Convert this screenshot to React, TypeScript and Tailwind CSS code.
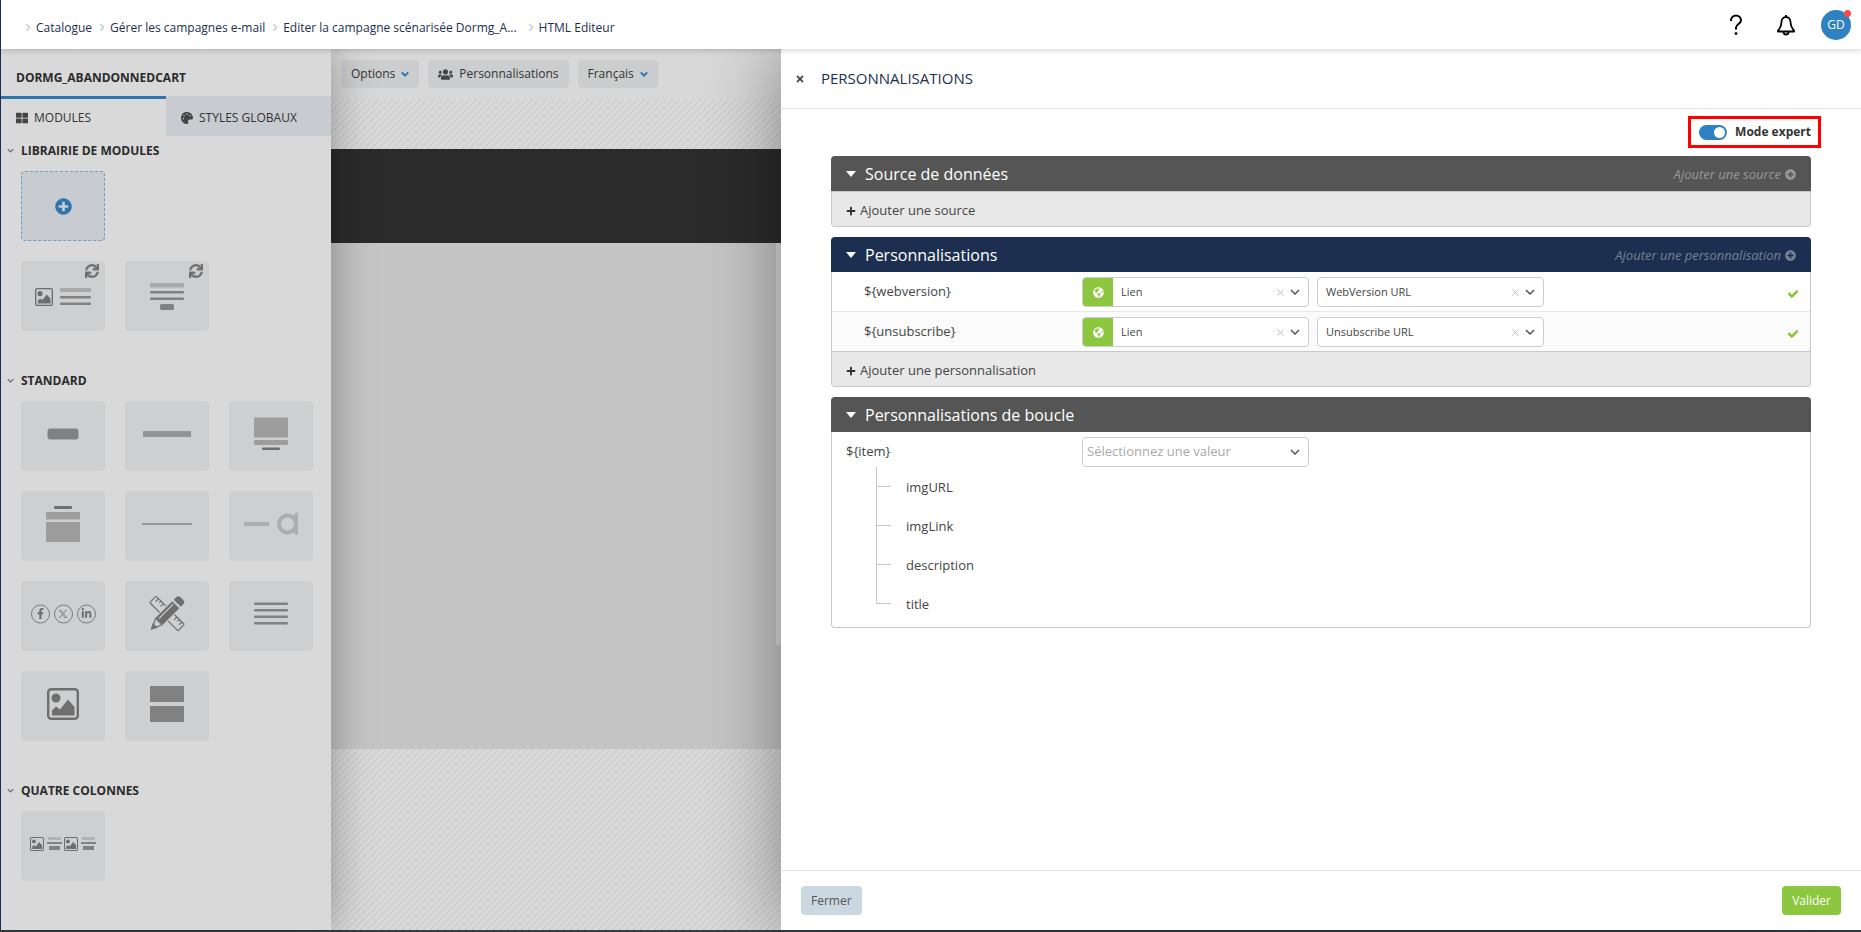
import { FC, ReactNode, useState } from "react";
import {
  FaCheck,
  FaFacebookF,
  FaGlobeAmericas,
  FaLinkedinIn,
  FaPalette,
  FaPlus,
  FaPlusCircle,
  FaSync,
  FaThLarge,
  FaTimes,
  FaUsers,
} from "react-icons/fa";
import { FaXTwitter } from "react-icons/fa6";

const crumbs = [
  "Catalogue",
  "Gérer les campagnes e-mail",
  "Editer la campagne scénarisée Dormg_A...",
  "HTML Editeur",
];

const tokens = [
  { name: "${webversion}", value: "WebVersion URL" },
  { name: "${unsubscribe}", value: "Unsubscribe URL" },
];

const loopFields = ["imgURL", "imgLink", "description", "title"];

const Chevron: FC<{ className?: string; width?: number }> = ({ className = "", width = 2 }) => (
  <svg viewBox="0 0 10 6" className={className} fill="none" stroke="currentColor" strokeWidth={width}>
    <path d="M1 1l4 4 4-4" />
  </svg>
);

/* Sidebar drawings, all on an 84x70 tile */
const Drawing: FC<{ children: ReactNode }> = ({ children }) => (
  <svg viewBox="0 0 84 70" className="h-[70px] w-[84px]" fill="#818181">
    {children}
  </svg>
);

const Picture: FC<{ x: number; y: number; size: number; stroke?: number }> = ({ x, y, size, stroke = 2 }) => (
  <svg x={x} y={y} width={size} height={size} viewBox="0 0 32 32" fill="#6e6e6e">
    <rect x={stroke / 2} y={stroke / 2} width={32 - stroke} height={32 - stroke} rx="3" fill="none" stroke="#6e6e6e" strokeWidth={stroke} />
    <circle cx="9" cy="10" r="4.5" />
    <path d="M5 27.500v-5l4-4 4 3 8-10 6.500 7.500v8.500z" />
  </svg>
);

const TextPicture = () => (
  <Drawing>
    <Picture x={14} y={27} size={18} stroke={2.4} />
    <rect x="39" y="27" width="31" height="4" fill="#a9a9a9" />
    <rect x="39" y="35" width="31" height="2.500" rx="1" />
    <rect x="39" y="41.500" width="31" height="2.500" rx="1" />
  </Drawing>
);

const TextButton = () => (
  <Drawing>
    <rect x="25" y="22" width="34" height="4.500" fill="#a9a9a9" />
    <rect x="25" y="30" width="34" height="2.500" rx="1" />
    <rect x="25" y="36.500" width="34" height="2.500" rx="1" />
    <rect x="35" y="43" width="14" height="6" rx="1.500" />
  </Drawing>
);

const standardTiles: { label: string; art: ReactNode }[] = [
  { label: "Bouton", art: <Drawing><rect x="26.500" y="27.500" width="31" height="11" rx="3" /></Drawing> },
  { label: "Titre", art: <Drawing><rect x="18" y="30" width="48" height="6" fill="#949494" /></Drawing> },
  {
    label: "Pied de page",
    art: (
      <Drawing>
        <rect x="25" y="16.500" width="34" height="20" fill="#9d9d9d" />
        <rect x="25" y="39" width="34" height="5" rx="1" fill="#9d9d9d" />
        <rect x="33" y="46.500" width="18" height="2.500" rx="1" fill="#6e6e6e" />
      </Drawing>
    ),
  },
  {
    label: "En-tête",
    art: (
      <Drawing>
        <rect x="33" y="15" width="18" height="3" rx="1" fill="#6e6e6e" />
        <rect x="25" y="21" width="34" height="7.500" fill="#9d9d9d" />
        <rect x="25" y="31" width="34" height="20" fill="#9d9d9d" />
      </Drawing>
    ),
  },
  { label: "Séparateur", art: <Drawing><rect x="17" y="32" width="50" height="2" fill="#989898" /></Drawing> },
  {
    label: "Logo",
    art: (
      <Drawing>
        <rect x="15" y="31" width="25" height="4" fill="#adadad" />
        <circle cx="58.500" cy="33" r="8.500" fill="none" stroke="#adadad" strokeWidth="4" />
        <path d="M69 21.500V44q-4 0-4-3V25q0-3 4-3.500z" fill="#adadad" />
      </Drawing>
    ),
  },
  {
    label: "Réseaux sociaux",
    art: (
      <Drawing>
        <g fill="none" stroke="#7a7a7a">
          <circle cx="19.500" cy="33" r="9" />
          <circle cx="42.500" cy="33" r="9" />
          <circle cx="65.500" cy="33" r="9" />
        </g>
        <FaFacebookF x={14} y={27} size={11} color="#6e6e6e" />
        <FaXTwitter x={37} y={28} size={10} color="#8a8a8a" />
        <FaLinkedinIn x={60} y={27} size={11} color="#6e6e6e" />
      </Drawing>
    ),
  },
  {
    label: "HTML",
    art: (
      <Drawing>
        <g transform="translate(42 32.500) rotate(45)">
          <rect x="-20" y="-4.500" width="40" height="9" rx="1" fill="none" stroke="#6e6e6e" strokeWidth="1.200" />
          <path d="M-16.500-4.500v4M-13-4.500v2.500M-9.500-4.500v4M9.500-4.500v4M13-4.500v2.500M16.500-4.500v4" stroke="#6e6e6e" strokeWidth="1.200" />
        </g>
        <g transform="translate(42 32.500) rotate(-45)" fill="#6e6e6e">
          <rect x="-14" y="-6" width="34" height="12" fill="#cecfd1" />
          <path d="M14.500-5h3.500q3 0 3 3v4q0 3-3 3h-3.500z" />
          <rect x="-11" y="-5" width="23.500" height="10" />
          <path d="M-9-2.200h20" stroke="#cecfd1" strokeWidth="1.200" />
          <path d="M-11.500-4.500L-21.500 0l10 4.500z" fill="#cecfd1" stroke="#6e6e6e" strokeWidth="1.200" />
          <path d="M-23 0l6.500-3.500v7z" />
        </g>
      </Drawing>
    ),
  },
  {
    label: "Texte",
    art: (
      <Drawing>
        {[21.5, 28, 34.5, 41].map((y) => (
          <rect key={y} x="25" y={y} width="34" height="2.500" rx="1" />
        ))}
      </Drawing>
    ),
  },
  { label: "Image", art: <Drawing><Picture x={26} y={17} size={32} stroke={2.4} /></Drawing> },
  {
    label: "Conteneur",
    art: (
      <Drawing>
        <rect x="25" y="15" width="34" height="16" />
        <rect x="25" y="35" width="34" height="16" />
      </Drawing>
    ),
  },
];

const FourColumns = () => (
  <Drawing>
    {[0, 34].map((x) => (
      <g key={x}>
        <Picture x={9 + x} y={26} size={14} stroke={2.4} />
        <rect x={27 + x} y="26" width="13" height="3" fill="#b3b3b3" />
        <rect x={26 + x} y="31" width="15" height="2" />
        <rect x={28 + x} y="35" width="11" height="4" />
      </g>
    ))}
  </Drawing>
);

const Tile: FC<{ label: string; sync?: boolean; children: ReactNode }> = ({ label, sync, children }) => (
  <button aria-label={label} className="relative h-[70px] w-[84px] rounded-sm bg-[#cecfd1]">
    {children}
    {sync && <FaSync className="absolute top-[3px] right-1.5 size-[14px] stroke-current stroke-[16] text-[#707070]" />}
  </button>
);

const ModuleGroup: FC<{ title: string; children: ReactNode }> = ({ title, children }) => (
  <section className="mb-[35px]">
    <h2 className="flex h-[30px] items-center text-[12px] font-bold text-[#2b2b2b]">
      <Chevron className="mr-[7px] mb-0.5 ml-1.5 h-[5px] w-[7px] text-[#666]" width={1.6} />
      {title}
    </h2>
    <div className="flex flex-wrap gap-5 pt-[5px] pl-5">{children}</div>
  </section>
);

const Dropdown: FC<{ label: string; value?: string; globe?: boolean }> = ({ label, value, globe }) => (
  <div className="relative flex h-[30px] w-[227px] overflow-hidden rounded-sm border border-[#ccc] bg-white">
    {globe && (
      <span className="flex w-[30px] shrink-0 items-center justify-center bg-[#8dc63f] text-white">
        <FaGlobeAmericas className="size-[11px]" />
      </span>
    )}
    <select
      aria-label={label}
      className={
        value
          ? "w-full appearance-none pr-12 pl-2 text-[11px] text-[#444]"
          : "w-full appearance-none pr-8 pl-1 text-[13px] text-[#aaa]"
      }
    >
      <option>{value || "Sélectionnez une valeur"}</option>
    </select>
    {value && (
      <button aria-label="Effacer" className="absolute inset-y-0 right-6 text-[#bbb]">
        <svg viewBox="0 0 7 7" className="size-[7px]" stroke="currentColor">
          <path d="M.5.5l6 6M6.500.5l-6 6" />
        </svg>
      </button>
    )}
    <Chevron className="pointer-events-none absolute top-[11px] right-2 h-[6px] w-[10px] text-[#555]" width={1.5} />
  </div>
);

const Panel: FC<{ title: string; add?: string; active?: boolean; children: ReactNode }> = ({ title, add, active, children }) => (
  <section className="mb-2.5">
    <header
      className={`flex h-[35px] items-center justify-between rounded-t-sm px-[15px] text-white ${active ? "bg-[#1c2f50]" : "bg-[#555]"}`}
    >
      <h2 className="flex items-center text-[16px]">
        <svg viewBox="0 0 10 6" className="mr-[9px] h-[6px] w-[10px]" fill="currentColor">
          <path d="M0 0h10L5 6z" />
        </svg>
        {title}
      </h2>
      {add && (
        <button className="flex items-center gap-1 pt-0.5 text-[13px] text-white/40 italic">
          {add}
          <FaPlusCircle className="size-[11px]" />
        </button>
      )}
    </header>
    <div className="overflow-hidden rounded-b-sm border-x border-b border-[#c8c8c8]">{children}</div>
  </section>
);

const AddRow: FC<{ children: ReactNode }> = ({ children }) => (
  <button className="flex h-[35px] w-full items-center gap-1 border-t border-[#c8c8c8] bg-[#e8e8e8] pt-1 pl-3.5 text-[13px] text-[#444]">
    <FaPlus className="size-[10px] text-[#333]" />
    {children}
  </button>
);

const App: FC = () => {
  const [expert, setExpert] = useState(true);

  return (
    <div className="flex min-h-screen flex-col border-b-2 border-[#3b3c40] font-['Open_Sans',sans-serif] text-[#333]">
      {/* Top bar */}
      <header className="relative z-20 flex h-[49px] items-center justify-between border-l border-[#1a2c55] bg-white pr-2.5 shadow-[0_1px_6px_rgba(0,0,0,0.2)]">
        <nav className="flex items-center pt-1.5 pl-[23px] text-[12px] text-[#1c2f50]">
          {crumbs.map((crumb) => (
            <a key={crumb} href="#" className="mr-1.5 flex items-center last:pl-1 last:font-medium">
              <Chevron className="mr-1 h-[5px] w-[8px] -rotate-90 text-[#ccc]" />
              {crumb}
            </a>
          ))}
        </nav>
        <div className="flex items-center">
          <button aria-label="Aide" className="mr-[34px]">
            <svg viewBox="0 0 14 22" className="h-[22px] w-[14px]" fill="none" stroke="#000" strokeWidth="2">
              <path d="M2 7V6.500a5 5 0 0 1 10 0c0 3-5 4-5 7v2" />
              <circle cx="7" cy="19.500" r="1" fill="#000" strokeWidth="1" />
            </svg>
          </button>
          <button aria-label="Notifications" className="mr-[26px]">
            <svg viewBox="0 0 18 22" className="h-[22px] w-[18px]" fill="none" stroke="#000" strokeWidth="1.800" strokeLinejoin="round">
              <path d="M9 1v2M9 3C6.500 3 4.500 5 4.500 8c0 5-1.500 6-3.500 8.500v1h16v-1c-2-2.500-3.500-3.500-3.500-8.500C13.500 5 11.500 3 9 3z" />
              <path d="M6.500 18a2.500 2.500 0 0 0 5 0" />
            </svg>
          </button>
          <button className="relative size-[30px] rounded-full bg-[#2e82c2] text-[12px] text-white">
            GD
            <span className="absolute top-0 right-0 size-[7px] rounded-full bg-[#ff4747]" />
          </button>
        </div>
      </header>

      <div className="flex flex-1">
        {/* Module library */}
        <aside className="relative z-10 w-[331px] border-l border-l-[#1a2c55] bg-[#d9d9d9] shadow-[0_0_40px_rgba(0,0,0,0.35)]">
          <h1 className="flex h-[47px] items-center pt-2.5 pl-[15px] text-[12px] font-bold text-[#2b2b2b]">DORMG_ABANDONNEDCART</h1>
          <div className="flex h-10 text-[12px]" role="tablist">
            <button role="tab" aria-selected="true" className="flex w-1/2 items-center gap-1.5 border-t-3 border-[#2a76ad] pl-[15px]">
              <FaThLarge className="size-[12px] text-[#444]" />
              MODULES
            </button>
            <button role="tab" aria-selected="false" className="flex w-1/2 items-center gap-1.5 border-t-3 border-[#c8cbd0] bg-[#c8cbd0] pl-[15px]">
              <FaPalette className="size-[12px] text-[#444]" />
              STYLES GLOBAUX
            </button>
          </div>
          <ModuleGroup title="LIBRAIRIE DE MODULES">
            <button
              aria-label="Ajouter un module"
              className="mr-40 flex h-[70px] w-[84px] items-center justify-center rounded-sm border border-dashed border-[#6f9fc6] bg-[#c8cbd0]"
            >
              <FaPlusCircle className="size-[17px] text-[#2a76ad]" />
            </button>
            <Tile label="Image et texte" sync><TextPicture /></Tile>
            <Tile label="Texte et bouton" sync><TextButton /></Tile>
          </ModuleGroup>
          <ModuleGroup title="STANDARD">
            {standardTiles.map((tile) => (
              <Tile key={tile.label} label={tile.label}>{tile.art}</Tile>
            ))}
          </ModuleGroup>
          <ModuleGroup title="QUATRE COLONNES">
            <Tile label="Quatre colonnes"><FourColumns /></Tile>
          </ModuleGroup>
        </aside>

        {/* E-mail canvas, dimmed behind the drawer */}
        <main className="flex w-[450px] shrink-0 flex-col bg-[#d9d9d9] bg-[linear-gradient(135deg,transparent_44%,#c6c6c6_46%,#c6c6c6_54%,transparent_56%)] bg-size-[7px_7px]">
          <div className="flex h-[50px] items-center gap-[9px] bg-[#d8d8d8] pl-2.5 text-[12px]">
            <button className="flex h-7 items-center gap-1.5 rounded-sm bg-[#cbcdce] px-2.5">
              Options
              <Chevron className="h-[6px] w-[8px] text-[#2a76ad]" width={2.5} />
            </button>
            <button className="flex h-7 items-center gap-1.5 rounded-sm bg-[#cbcdce] px-2.5">
              <FaUsers className="size-[15px] text-[#444]" />
              Personnalisations
            </button>
            <button className="flex h-7 items-center gap-1.5 rounded-sm bg-[#cbcdce] px-2.5">
              Français
              <Chevron className="h-[6px] w-[8px] text-[#2a76ad]" width={2.5} />
            </button>
          </div>
          <div className="mt-[50px] h-[94px] bg-[#2b2b2b]" />
          <div className="flex h-[506px] justify-end bg-[#c5c5c5]">
            <div className="h-[402px] w-[5px] bg-[#d9d9d9]" />
          </div>
        </main>

        {/* Personalisation drawer */}
        <section className="relative z-10 flex flex-1 flex-col bg-white shadow-[0_0_70px_rgba(0,0,0,0.4)]">
          <header className="flex h-[60px] items-center border-b border-[#e5e5e5] pl-[14px]">
            <button aria-label="Fermer le panneau" className="mr-4">
              <FaTimes className="size-[10px] text-[#444]" />
            </button>
            <h1 className="text-[15px] text-[#1c2f50]">PERSONNALISATIONS</h1>
          </header>

          <div className="flex-1 px-[50px]">
            <div className="-mr-2.5 flex justify-end pt-[7px] pb-2">
              <label className="flex h-8 items-center gap-2 border-3 border-[#f00] pr-[7px] pl-2 text-[12px] font-bold">
                <input type="checkbox" className="peer sr-only" checked={expert} onChange={() => setExpert(!expert)} />
                <span className="flex h-[15px] w-7 justify-start rounded-full bg-gray-400 p-0.5 peer-checked:justify-end peer-checked:bg-[#2e82c2]">
                  <span className="size-[11px] rounded-full bg-white" />
                </span>
                Mode expert
              </label>
            </div>

            <Panel title="Source de données" add="Ajouter une source">
              <AddRow>Ajouter une source</AddRow>
            </Panel>

            <Panel title="Personnalisations" add="Ajouter une personnalisation" active>
              {tokens.map((token) => (
                <div
                  key={token.name}
                  className="flex h-[39px] items-center gap-2 border-[#e8e8e8] pt-px pr-3 text-[13px] text-[#444] even:h-10 even:border-t even:bg-[#fbfbfb]"
                >
                  <span className="w-[242px] pl-8">{token.name}</span>
                  <Dropdown label={`Type de ${token.name}`} value="Lien" globe />
                  <Dropdown label={`Valeur de ${token.name}`} value={token.value} />
                  <FaCheck className="mt-1 ml-auto size-[10px] stroke-current stroke-[50] text-[#8dc63f]" />
                </div>
              ))}
              <AddRow>Ajouter une personnalisation</AddRow>
            </Panel>

            <Panel title="Personnalisations de boucle">
              <div className="flex h-[35px] items-end gap-2 text-[13px] text-[#444]">
                <span className="flex h-[30px] w-[242px] items-center pl-3.5">{"${item}"}</span>
                <Dropdown label="Valeur de ${item}" />
              </div>
              <ul className="pb-1 pl-11 text-[13px] text-[#444]">
                {loopFields.map((field) => (
                  <li key={field} className="group flex h-[39px]">
                    <span className="flex w-[15px] flex-col">
                      <span className="h-5 border-b border-l border-[#c8c8c8]" />
                      <span className="flex-1 border-l border-[#c8c8c8] group-last:border-l-0" />
                    </span>
                    <span className="pt-2.5 pl-[15px] leading-5">{field}</span>
                  </li>
                ))}
              </ul>
            </Panel>
          </div>

          <footer className="flex h-[60px] items-center justify-between border-t border-[#e5e5e5] px-5 text-[12px]">
            <button className="h-[29px] rounded-sm bg-[#ccd8e1] px-2.5 text-[#555]">Fermer</button>
            <button className="h-[29px] rounded-sm bg-[#8dc63f] px-2.5 font-medium text-white">Valider</button>
          </footer>
        </section>
      </div>
    </div>
  );
};

export default App;
